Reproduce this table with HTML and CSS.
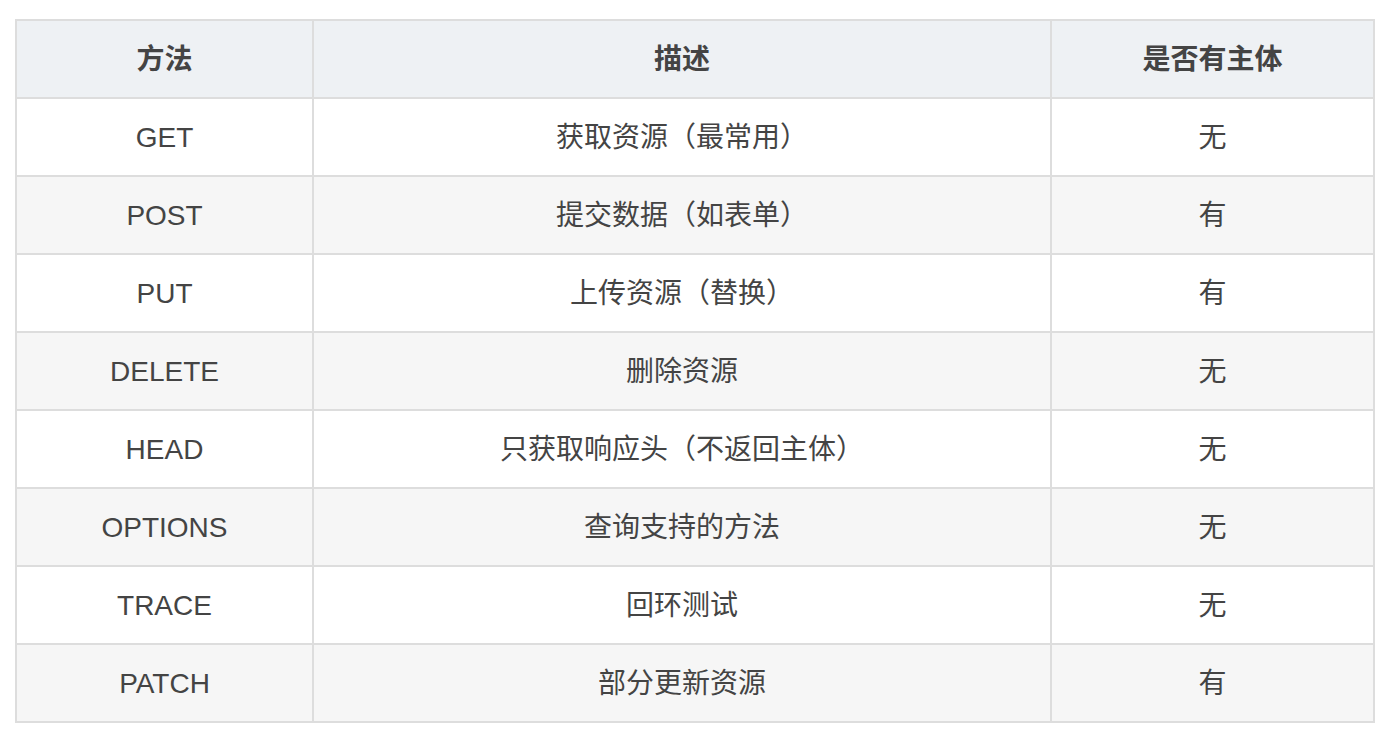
FILE: index.html
```html
<!DOCTYPE html>
<html lang="zh-CN">
<head>
<meta charset="utf-8">
<title>HTTP 方法</title>
<link rel="stylesheet" href="styles.css">
</head>
<body>
<table class="methods">
  <thead>
    <tr>
      <th class="c1">方法</th>
      <th class="c2">描述</th>
      <th class="c3">是否有主体</th>
    </tr>
  </thead>
  <tbody>
    <tr><td>GET</td><td>获取资源（最常用）</td><td>无</td></tr>
    <tr><td>POST</td><td>提交数据（如表单）</td><td>有</td></tr>
    <tr><td>PUT</td><td>上传资源（替换）</td><td>有</td></tr>
    <tr><td>DELETE</td><td>删除资源</td><td>无</td></tr>
    <tr><td>HEAD</td><td>只获取响应头（不返回主体）</td><td>无</td></tr>
    <tr><td>OPTIONS</td><td>查询支持的方法</td><td>无</td></tr>
    <tr><td>TRACE</td><td>回环测试</td><td>无</td></tr>
    <tr><td>PATCH</td><td>部分更新资源</td><td>有</td></tr>
  </tbody>
</table>
</body>
</html>
```
FILE: styles.css
```css
html, body {
  margin: 0;
  padding: 0;
  background: #ffffff;
}
body {
  padding: 19px 13px 0 15px;
  font-family: "Liberation Sans", Arial, "Noto Sans CJK SC", sans-serif;
  color: #444444;
}
.methods {
  width: 1360px;
  box-sizing: border-box;
  table-layout: fixed;
  border-collapse: separate;
  border-spacing: 0;
  border-top: 2px solid #dddddd;
  border-left: 2px solid #dddddd;
  font-size: 28px;
}
.methods th,
.methods td {
  box-sizing: border-box;
  height: 78px;
  padding: 2px 10px 0;
  text-align: center;
  vertical-align: middle;
  border-right: 2px solid #dddddd;
  border-bottom: 2px solid #dddddd;
  line-height: 32px;
}
.methods th {
  background: #eef1f4;
  font-weight: bold;
  color: #444444;
}
.methods .c1 { width: 297px; }
.methods .c2 { width: 738px; }
.methods .c3 { width: 323px; }
.methods tbody tr:nth-child(odd) td { background: #ffffff; }
.methods tbody tr:nth-child(even) td { background: #f6f6f6; }
```
